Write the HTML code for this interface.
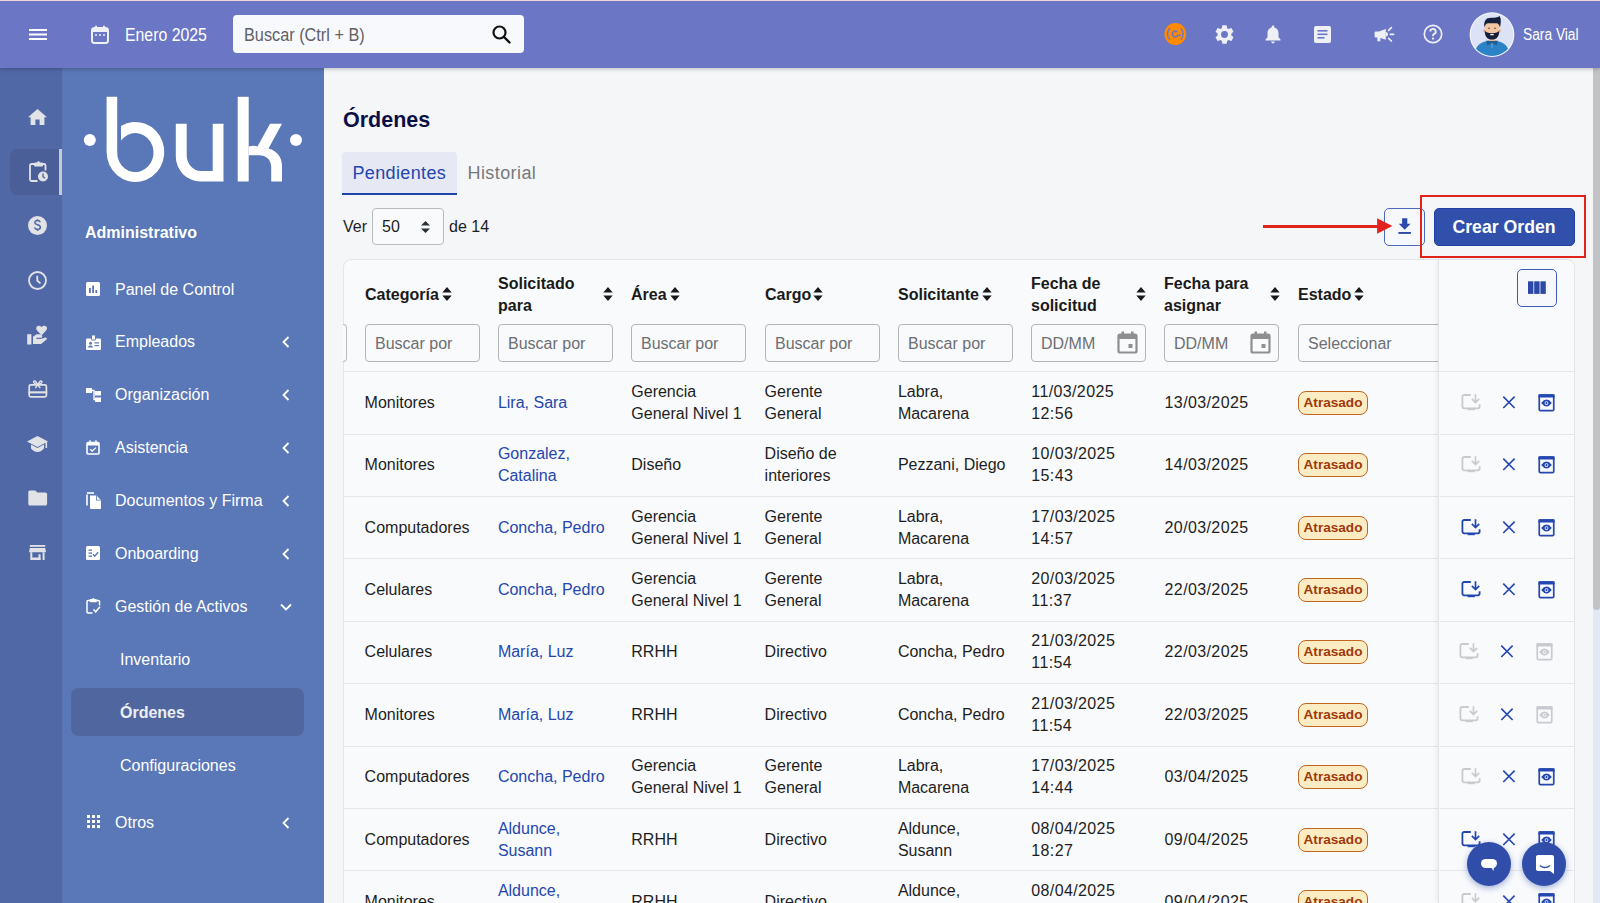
<!DOCTYPE html>
<html><head><meta charset="utf-8">
<style>
*{box-sizing:border-box;margin:0;padding:0}
html,body{width:1600px;height:903px;overflow:hidden;background:#f5f6f8;font-family:"Liberation Sans",sans-serif;color:#1e1e1e}
.a{position:absolute}
svg{position:absolute;overflow:visible}
#hdr{position:absolute;left:0;top:0;width:1600px;height:68px;background:#6b77c4;border-top:1px solid #f1d6dc;z-index:5;box-shadow:0 1px 4px rgba(0,0,0,.25)}
#rail{position:absolute;left:0;top:68px;width:62px;height:835px;background:#5168a6}
#side{position:absolute;left:62px;top:68px;width:262px;height:835px;background:#5a77b7}
.si{position:absolute;left:115px;color:#fff;font-size:16px;line-height:20px;white-space:nowrap;margin-top:1.5px}
.sub{left:120px}
.chev{position:absolute;left:282px}
#scroll{position:absolute;left:1593px;top:68px;width:7px;height:835px;background:#e4e8f2}
#thumb{position:absolute;left:1593px;top:68px;width:7px;height:542px;background:#c2c3c6;border-radius:0 0 4px 4px}
.c{position:absolute;font-size:16px;line-height:22px;color:#1e1e1e;white-space:nowrap}
.lnk{color:#2447b0}
.dt{letter-spacing:.38px}
.rowline{position:absolute;left:344px;width:1095px;height:1px;background:#e4e6eb}
.rowline2{position:absolute;left:1439.5px;width:134.5px;height:1px;background:#e4e6eb}
.badge{position:absolute;width:70px;height:24px;border:1px solid #c2651f;background:#fcecc3;border-radius:8px;color:#a0390a;font-weight:bold;font-size:13.6px;line-height:21px;text-align:center}
.ic{position:absolute}
.th{position:absolute;font-size:16px;line-height:22px;font-weight:bold;color:#1a1a1a;white-space:nowrap;margin-top:1px}
.inp{position:absolute;top:324px;height:38px;width:115px;border:1px solid #b9bbbf;border-radius:4px;background:#f9fafc;font-size:16px;line-height:36px;padding-left:9px;padding-top:1px;color:#6d6f73;border-color:#b3b5b9;white-space:nowrap;overflow:hidden}
.sort{position:absolute;width:10px;height:14px}
</style></head><body>
<!-- HEADER -->
<div id="hdr">
  <svg style="left:29px;top:28px" width="18" height="12" viewBox="0 0 18 12"><rect x="0" y="0" width="18" height="2" fill="#fff"/><rect x="0" y="4.5" width="18" height="2" fill="#fff"/><rect x="0" y="9" width="18" height="2" fill="#fff"/></svg>
  <svg style="left:91px;top:24px" width="18" height="19" viewBox="0 0 18 19"><rect x="1" y="3" width="16" height="15" rx="2.5" fill="none" stroke="#eef0f7" stroke-width="2"/><rect x="1" y="3" width="16" height="4" fill="#eef0f7"/><rect x="4" y="0.5" width="2" height="4" rx="1" fill="#eef0f7"/><rect x="12" y="0.5" width="2" height="4" rx="1" fill="#eef0f7"/><circle cx="5" cy="10" r="1" fill="#eef0f7"/><circle cx="9" cy="10" r="1" fill="#eef0f7"/><circle cx="13" cy="10" r="1" fill="#eef0f7"/></svg>
  <div class="a" style="left:125px;top:24px;font-size:17.5px;line-height:20px;color:#fff;transform:scaleX(.905);transform-origin:0 0">Enero 2025</div>
  <div class="a" style="left:233px;top:14px;width:291px;height:38px;background:#f8f9fc;border-radius:4px"></div>
  <div class="a" style="left:244px;top:24px;font-size:17.5px;line-height:20px;color:#5f6166;transform:scaleX(.93);transform-origin:0 0">Buscar (Ctrl + B)</div>
  <svg style="left:492px;top:24px" width="19" height="19" viewBox="0 0 19 19"><circle cx="7.5" cy="7.5" r="6" fill="none" stroke="#111" stroke-width="2.2"/><path d="M12 12L17.5 17.5" stroke="#111" stroke-width="2.4" stroke-linecap="round"/></svg>
  <!-- right icons -->
  <svg style="left:1160px;top:19px" width="30" height="30" viewBox="1160 20 30 30"><circle cx="1175.3" cy="34" r="10.9" fill="#ff8a00"/><path d="M1169.9 28.2A8.3 8.3 0 0 0 1169.9 39.8" stroke="#6b77c4" stroke-width="1.4" fill="none"/><path d="M1180.7 28.2A8.3 8.3 0 0 1 1180.7 39.8" stroke="#6b77c4" stroke-width="1.4" fill="none"/><path d="M1177.4 32A2.9 2.9 0 1 0 1177.6 35.8" stroke="#6b77c4" stroke-width="1.6" fill="none"/><path d="M1177 35.3L1181 35.3" stroke="#6b77c4" stroke-width="1.5"/></svg>
  <svg style="left:1212.5px;top:21.5px" width="23" height="23" viewBox="0 0 24 24"><path fill="#eef0f5" d="M19.14 12.94c.04-.3.06-.61.06-.94 0-.32-.02-.64-.07-.94l2.03-1.58a.49.49 0 0 0 .12-.61l-1.92-3.32a.49.49 0 0 0-.59-.22l-2.39.96c-.5-.38-1.03-.7-1.62-.94l-.36-2.54a.48.48 0 0 0-.48-.41h-3.84c-.24 0-.43.17-.47.41l-.36 2.54c-.59.24-1.13.57-1.62.94l-2.39-.96a.48.48 0 0 0-.59.22L2.74 8.87c-.12.21-.08.47.12.61l2.03 1.58c-.05.3-.09.63-.09.94s.02.64.07.94l-2.03 1.58a.49.49 0 0 0-.12.61l1.92 3.32c.12.22.37.29.59.22l2.39-.96c.5.38 1.03.7 1.62.94l.36 2.54c.05.24.24.41.48.41h3.84c.24 0 .44-.17.47-.41l.36-2.54c.59-.24 1.13-.56 1.62-.94l2.39.96c.22.08.47 0 .59-.22l1.92-3.32c.12-.22.07-.47-.12-.61l-2.01-1.58zM12 15.6A3.6 3.6 0 1 1 12 8.4a3.6 3.6 0 0 1 0 7.2z"/></svg>
  <svg style="left:1265px;top:24px" width="16" height="19" viewBox="0 0 16 19"><path fill="#eef0f5" d="M8 0.5c.8 0 1.3.6 1.3 1.3v.6c2.6.6 4.2 2.8 4.2 5.5v4.4l2 2.2v.9H.5v-.9l2-2.2V7.9c0-2.7 1.6-4.9 4.2-5.5v-.6C6.7 1.1 7.2.5 8 .5zM6.2 16.5h3.6c0 1.1-.8 1.9-1.8 1.9s-1.8-.8-1.8-1.9z"/></svg>
  <svg style="left:1314px;top:25px" width="17" height="17" viewBox="0 0 17 17"><rect x="0" y="0" width="17" height="17" rx="2" fill="#eef0f5"/><rect x="3.5" y="4" width="10" height="1.6" fill="#6b77c4"/><rect x="3.5" y="7.5" width="10" height="1.6" fill="#6b77c4"/><rect x="3.5" y="11" width="7" height="1.6" fill="#6b77c4"/></svg>
  <svg style="left:1372px;top:24px" width="24" height="19" viewBox="1372 25 24 19"><path fill="#eef0f5" d="M1375.8 31.5H1378.9L1385.8 29.1V39.8L1378.9 37.4H1375.8A1.2 1.2 0 0 1 1374.6 36.2V32.7A1.2 1.2 0 0 1 1375.8 31.5Z"/><rect x="1377.4" y="37" width="2.9" height="4.3" fill="#eef0f5"/><path d="M1385.8 32.1A2.2 2.2 0 0 1 1385.8 36.5Z" fill="#eef0f5"/><path d="M1388.6 30.4L1391.4 27.7M1390.4 34.3H1393.6M1388.6 38.3L1391.4 41" stroke="#eef0f5" stroke-width="1.7" stroke-linecap="round"/></svg>
  <svg style="left:1423px;top:23.3px" width="20" height="20" viewBox="0 0 20 20"><circle cx="10" cy="10" r="8.7" fill="none" stroke="#eef0f5" stroke-width="1.7"/><path d="M7.3 7.6a2.7 2.7 0 1 1 3.6 2.5c-.6.3-.9.7-.9 1.3v.8" stroke="#eef0f5" stroke-width="1.8" fill="none"/><circle cx="10" cy="14.6" r="1.1" fill="#eef0f5"/></svg>
  <!-- avatar -->
  <svg style="left:1469px;top:11px" width="46" height="46" viewBox="1469 12 46 46">
    <defs><clipPath id="av"><circle cx="1492" cy="34.6" r="21.3"/></clipPath></defs>
    <circle cx="1492" cy="34.6" r="22.4" fill="#f4f5fb"/>
    <circle cx="1492" cy="34.6" r="21.3" fill="#dde3f7"/>
    <g clip-path="url(#av)">
      <path d="M1475.5 58V51C1476 44.5 1484 40.5 1492 40.5S1508 44.5 1508.5 51V58Z" fill="#2b82c6"/>
      <path d="M1486 40.8L1498 40.8L1496.5 45.5L1492 43L1487.5 45.5Z" fill="#1e5f96"/>
      <rect x="1491.6" y="43" width=".9" height="5" fill="#7fa8cc"/>
      <rect x="1489" y="36" width="6" height="5" fill="#ecb48c"/>
      <circle cx="1484.5" cy="30.5" r="1.6" fill="#eeb892"/><circle cx="1499.5" cy="30.5" r="1.6" fill="#eeb892"/>
      <rect x="1484.8" y="21" width="14.4" height="16" rx="4" fill="#f3c6a1"/>
      <path d="M1484.6 30.5C1485 37 1487.5 39.6 1492 39.6S1499 37 1499.4 30.5C1498 32.5 1496 33.2 1492 33.2S1486 32.5 1484.6 30.5Z" fill="#16203c"/>
      <path d="M1484.3 27.5C1483.5 21 1486 17.8 1491 17.8C1494.5 17.8 1497 17.8 1500 16C1500 17 1499.5 17.8 1500.8 18.3C1500.3 19 1501.5 21 1500 27.5C1499.3 25 1498.5 23.2 1496.5 23.2H1488.2C1486.2 23.2 1485 25 1484.3 27.5Z" fill="#16203c"/>
      <circle cx="1489" cy="28.3" r=".7" fill="#3a2b2b"/><circle cx="1495" cy="28.3" r=".7" fill="#3a2b2b"/>
      <path d="M1490.3 34.6H1493.7" stroke="#fff" stroke-width="1.1"/>
    </g>
  </svg>
  <div class="a" style="left:1523px;top:24px;font-size:16px;line-height:20px;color:#fff;transform:scaleX(.86);transform-origin:0 0">Sara Vial</div>
</div>

<!-- RAIL -->
<div id="rail"></div>
<div class="a" style="left:10px;top:149px;width:49px;height:46px;background:#4a5e98;border-radius:8px 0 0 8px"></div>
<div class="a" style="left:59px;top:149px;width:3px;height:46px;background:#c9cace"></div>
<!-- rail icons -->
<svg style="left:28px;top:109px" width="19" height="16" viewBox="0 0 19 16"><path fill="#e2e3e7" d="M9.5 0L19 8.2h-2.6V16h-4.8v-5.5H7.4V16H2.6V8.2H0z"/></svg>
<svg style="left:29px;top:161px" width="19" height="21" viewBox="0 0 19 21"><path d="M5.5 3H2.5a1.5 1.5 0 0 0-1.5 1.5v14A1.5 1.5 0 0 0 2.5 20h6" fill="none" stroke="#e2e3e7" stroke-width="1.8"/><path d="M13.5 3h1.5a1.5 1.5 0 0 1 1.5 1.5v5" fill="none" stroke="#e2e3e7" stroke-width="1.8"/><rect x="5" y="1.5" width="9" height="4" rx="1" fill="#e2e3e7"/><circle cx="9.5" cy="1.5" r="1.3" fill="#e2e3e7"/><circle cx="14" cy="15.5" r="5" fill="#e2e3e7"/><path d="M14 12.5v3.2l2 1.5" stroke="#4a5e98" stroke-width="1.3" fill="none"/></svg>
<svg style="left:28px;top:216px" width="19" height="19" viewBox="0 0 19 19"><circle cx="9.5" cy="9.5" r="9.5" fill="#e2e3e7"/><path d="M12.3 6.2c-.4-1-1.4-1.6-2.8-1.6-1.6 0-2.7.8-2.7 2 0 2.7 5.6 1.6 5.6 4.6 0 1.3-1.2 2.2-2.9 2.2-1.5 0-2.6-.7-3-1.8M9.5 3.3v1.4M9.5 13.4v1.6" stroke="#5168a6" stroke-width="1.5" fill="none"/></svg>
<svg style="left:28px;top:271px" width="19" height="19" viewBox="0 0 19 19"><circle cx="9.5" cy="9.5" r="8.5" fill="none" stroke="#e2e3e7" stroke-width="1.8"/><path d="M9.3 4.8v5l3.2 2.6" stroke="#e2e3e7" stroke-width="1.8" fill="none"/></svg>
<svg style="left:20px;top:320px" width="32" height="30" viewBox="20 320 32 30"><rect x="27.2" y="334.2" width="4.2" height="10.3" fill="#e2e3e7"/><path fill="#e2e3e7" d="M33 336.8L36.6 334.2H39.5C41.3 334.2 42.3 335.2 42.3 336.3C42.3 337.3 41.4 337.8 40.5 337.8H36.8V338.6H42.5L45.2 337.6C46.3 337.2 47.2 338.2 46.7 339.3L42 343.2C41.4 343.8 40.6 344.1 39.7 344.1H33Z"/><path fill="#5168a6" d="M36.3 338.1H41.2V338.9H36.3Z"/><path fill="#e2e3e7" d="M41.6 335.2L37.5 331.1C36 329.6 35.8 327.8 36.9 326.6C38 325.4 40.2 325.4 41.6 327.2C43 325.4 45.2 325.4 46.3 326.6C47.4 327.8 47.2 329.6 45.7 331.1Z"/></svg>
<svg style="left:20px;top:375px" width="32" height="28" viewBox="20 375 32 28"><rect x="29.2" y="384.8" width="17.2" height="12" rx="1.6" fill="none" stroke="#e2e3e7" stroke-width="1.7"/><rect x="28.4" y="391.3" width="18.8" height="2.1" fill="#e2e3e7"/><path d="M37.8 384.8C36.5 382.5 35 380 33.8 381.2C32.8 382.3 35 384.5 37.8 384.8C40.6 384.5 42.8 382.3 41.8 381.2C40.6 380 39.1 382.5 37.8 384.8L35.3 388.2M37.8 384.8L40.3 388.2" fill="none" stroke="#e2e3e7" stroke-width="1.4"/></svg>
<svg style="left:27px;top:436px" width="21" height="17" viewBox="0 0 21 17"><path fill="#e2e3e7" d="M10.5 0L21 5.5 10.5 11 0 5.5z"/><path fill="#e2e3e7" d="M4 8.5v4c2 2.5 4.5 3.5 6.5 3.5s4.5-1 6.5-3.5v-4l-6.5 3.4z"/><rect x="18.5" y="6" width="1.6" height="6" fill="#e2e3e7"/></svg>
<svg style="left:20px;top:485px" width="32" height="24" viewBox="20 485 32 24"><path fill="#e2e3e7" d="M30 490.5H35.3L37.3 492.5H45.3C46.3 492.5 47.1 493.3 47.1 494.3V503.7C47.1 504.7 46.3 505.5 45.3 505.5H30C29 505.5 28.3 504.7 28.3 503.7V492.3C28.3 491.3 29 490.5 30 490.5Z"/></svg>
<svg style="left:20px;top:540px" width="32" height="24" viewBox="20 540 32 24"><rect x="29.8" y="545" width="15.4" height="1.8" fill="#e2e3e7"/><path fill="#e2e3e7" d="M29.8 548H45.2L46 552.3H29Z"/><path fill="#e2e3e7" d="M30.3 552.3H32.3V557.5H38.5V554.3H40.5V560H30.3Z"/><path fill="#e2e3e7" d="M42.6 552.3H44.6V560H42.6Z"/><path fill="#e2e3e7" d="M38.5 557.5H40.5V560H38.5Z"/></svg>

<!-- SIDEBAR -->
<div id="side"></div>
<svg style="left:83px;top:96px" width="222" height="88" viewBox="83 96 222 88">
  <circle cx="89.8" cy="140" r="6" fill="#fff"/>
  <circle cx="296" cy="140" r="6" fill="#fff"/>
  <path fill="#fff" d="M106.6 96.8H117.2V152.3A18.15 19.5 0 1 0 121 140.6V126A28.85 30 0 1 1 106.6 152Z"/>
  <path fill="#fff" d="M175.8 123.7h10.9v31.3a14 16 0 0 0 14 16h12v-47.3h10.8v57.8h-23a24.7 25 0 0 1 -24.7 -25z"/>
  <rect x="237.7" y="96.8" width="11" height="84.7" fill="#fff"/>
  <path fill="#fff" d="M248.7 146.6q4.5-1.7 8.8 -.1l12.5-22.8h12l-13.5 24.8c8.5 2.5 13.5 8.5 13.5 17.5v15.5h-10.8v-14c0-7.5-4.5-12.3-12.5-12.3h-10z"/>
</svg>
<div class="a" style="left:85px;top:222.5px;font-size:16px;line-height:20px;font-weight:bold;color:#fff">Administrativo</div>

<!-- side items -->
<svg style="left:86px;top:282px" width="14" height="14" viewBox="0 0 14 14"><rect width="14" height="14" rx="1.5" fill="#fff"/><rect x="3" y="6" width="1.8" height="5" fill="#5a77b7"/><rect x="6.2" y="3.5" width="1.8" height="7.5" fill="#5a77b7"/><rect x="9.4" y="8" width="1.8" height="3" fill="#5a77b7"/></svg>
<div class="si" style="top:278px">Panel de Control</div>

<svg style="left:86px;top:335px" width="15" height="15" viewBox="0 0 15 15"><rect x="0" y="3.5" width="15" height="11.5" rx="1.2" fill="#fff"/><rect x="5.5" y="0" width="4" height="5" rx=".8" fill="#fff" stroke="#5a77b7" stroke-width="1"/><circle cx="4.5" cy="8.3" r="1.5" fill="#5a77b7"/><path d="M2 12.5c.3-1.5 1.2-2 2.5-2s2.2.5 2.5 2z" fill="#5a77b7"/><rect x="8.5" y="7.3" width="4.5" height="1.2" fill="#5a77b7"/><rect x="8.5" y="10" width="4.5" height="1.2" fill="#5a77b7"/></svg>
<div class="si" style="top:330.5px">Empleados</div>

<svg style="left:86px;top:388px" width="15" height="14" viewBox="0 0 15 14"><rect x="0" y="0" width="6" height="5" fill="#fff"/><rect x="9" y="3" width="6" height="4.5" fill="#fff"/><rect x="9" y="9.5" width="6" height="4.5" fill="#fff"/><path d="M6 2.5h2v9h1M8 5.3h1" stroke="#fff" stroke-width="1.3" fill="none"/></svg>
<div class="si" style="top:383.5px">Organización</div>

<svg style="left:86px;top:440px" width="14" height="15" viewBox="0 0 14 15"><rect x="1" y="2.5" width="12" height="11.5" rx="1" fill="none" stroke="#fff" stroke-width="1.6"/><rect x="1" y="2.5" width="12" height="3" fill="#fff"/><rect x="3.3" y="0.3" width="1.5" height="3" fill="#fff"/><rect x="9.2" y="0.3" width="1.5" height="3" fill="#fff"/><path d="M4.3 9.3l1.9 1.9 3.6-3.6" stroke="#fff" stroke-width="1.3" fill="none"/></svg>
<div class="si" style="top:436.3px">Asistencia</div>

<svg style="left:86px;top:492px" width="15" height="17" viewBox="0 0 15 17"><path d="M1 2.5v11" stroke="#fff" stroke-width="1.6"/><path d="M1 1h7" stroke="#fff" stroke-width="1.6"/><path fill="#fff" d="M4 3.5h6.5l4.5 4.5v8c0 .6-.4 1-1 1H5c-.6 0-1-.4-1-1z"/><path fill="#5a77b7" d="M10 3.5v5h5v-.6L10.6 3.5z"/><path fill="#fff" d="M10.8 4v3.7h3.7z"/></svg>
<div class="si" style="top:489.2px">Documentos y Firma</div>

<svg style="left:86px;top:546px" width="14" height="14" viewBox="0 0 14 14"><rect width="14" height="14" rx="1.5" fill="#fff"/><rect x="2.5" y="3.5" width="3.5" height="1.3" fill="#5a77b7"/><rect x="2.5" y="6.5" width="3.5" height="1.3" fill="#5a77b7"/><rect x="2.5" y="9.5" width="3.5" height="1.3" fill="#5a77b7"/><path d="M7 8.3l1.8 1.8 3.3-3.8" stroke="#5a77b7" stroke-width="1.4" fill="none"/></svg>
<div class="si" style="top:542px">Onboarding</div>

<svg style="left:86px;top:598px" width="15" height="16" viewBox="0 0 15 16"><path d="M4 2.5H2c-.6 0-1 .4-1 1V14c0 .6.4 1 1 1h4.5" fill="none" stroke="#fff" stroke-width="1.5"/><path d="M10.5 2.5H12.5c.6 0 1 .4 1 1v4" fill="none" stroke="#fff" stroke-width="1.5"/><rect x="3.8" y="1" width="7" height="3.2" rx=".8" fill="#fff"/><circle cx="7.3" cy="1" r="1" fill="#fff"/><path d="M7.5 11.5l2.2 2.3 4.3-5" stroke="#fff" stroke-width="1.6" fill="none"/></svg>
<div class="si" style="top:595px">Gestión de Activos</div>

<div class="si sub" style="top:648px">Inventario</div>
<div class="a" style="left:71px;top:688px;width:233px;height:48px;background:#4f669f;border-radius:8px"></div>
<div class="si sub" style="top:701.2px;font-weight:bold;color:#eceef3">Órdenes</div>
<div class="si sub" style="top:754px">Configuraciones</div>

<svg style="left:87px;top:815px" width="13" height="13" viewBox="0 0 13 13"><g fill="#fff"><rect x="0" y="0" width="3" height="3"/><rect x="5" y="0" width="3" height="3"/><rect x="10" y="0" width="3" height="3"/><rect x="0" y="5" width="3" height="3"/><rect x="5" y="5" width="3" height="3"/><rect x="10" y="5" width="3" height="3"/><rect x="0" y="10" width="3" height="3"/><rect x="5" y="10" width="3" height="3"/><rect x="10" y="10" width="3" height="3"/></g></svg>
<div class="si" style="top:811.3px">Otros</div>

<!-- chevrons -->
<svg class="chev" style="top:336px" width="8" height="12" viewBox="0 0 8 12"><path d="M6.5 1L1.5 6l5 5" stroke="#fff" stroke-width="1.8" fill="none"/></svg>
<svg class="chev" style="top:389px" width="8" height="12" viewBox="0 0 8 12"><path d="M6.5 1L1.5 6l5 5" stroke="#fff" stroke-width="1.8" fill="none"/></svg>
<svg class="chev" style="top:442px" width="8" height="12" viewBox="0 0 8 12"><path d="M6.5 1L1.5 6l5 5" stroke="#fff" stroke-width="1.8" fill="none"/></svg>
<svg class="chev" style="top:495px" width="8" height="12" viewBox="0 0 8 12"><path d="M6.5 1L1.5 6l5 5" stroke="#fff" stroke-width="1.8" fill="none"/></svg>
<svg class="chev" style="top:548px" width="8" height="12" viewBox="0 0 8 12"><path d="M6.5 1L1.5 6l5 5" stroke="#fff" stroke-width="1.8" fill="none"/></svg>
<svg class="chev" style="top:817px" width="8" height="12" viewBox="0 0 8 12"><path d="M6.5 1L1.5 6l5 5" stroke="#fff" stroke-width="1.8" fill="none"/></svg>
<svg class="a" style="left:280px;top:603px" width="12" height="8" viewBox="0 0 12 8"><path d="M1 1.5l5 5 5-5" stroke="#fff" stroke-width="1.8" fill="none"/></svg>

<!-- MAIN -->
<div class="a" style="left:343px;top:106px;font-size:21.5px;line-height:28px;font-weight:bold;color:#0b0f47">Órdenes</div>
<div class="a" style="left:342px;top:152px;width:115px;height:43px;background:#e6e9f3;border-radius:4px 4px 0 0;border-bottom:2px solid #1f43ad"></div>
<div class="a" style="left:352.5px;top:162px;font-size:18px;line-height:22px;color:#2346ae;letter-spacing:.36px">Pendientes</div>
<div class="a" style="left:467.5px;top:162px;font-size:18px;line-height:22px;color:#77787c;letter-spacing:.42px">Historial</div>

<div class="a" style="left:343px;top:216.5px;font-size:16px;line-height:20px;color:#1e1e1e">Ver</div>
<div class="a" style="left:372px;top:208px;width:72px;height:37px;border:1px solid #b9bbbf;border-radius:4px;background:#f9fafc"></div>
<div class="a" style="left:382px;top:216.5px;font-size:16px;line-height:20px;color:#1e1e1e">50</div>
<svg style="left:421px;top:221px" width="9" height="12" viewBox="0 0 9 12"><path d="M4.5 0L9 4.5H0zM4.5 12L0 7.5h9z" fill="#2a2f36"/></svg>
<div class="a" style="left:449px;top:216.5px;font-size:16px;line-height:20px;color:#1e1e1e">de 14</div>

<!-- red arrow + box -->
<div class="a" style="left:1384px;top:208px;width:40.5px;height:37.5px;border:1.2px solid #4d68bf;border-radius:5px;background:#f7f8fb"></div>
<svg style="left:1395px;top:215px" width="20" height="22" viewBox="1395 215 20 22"><path fill="#2c49ab" d="M1402.1 218.3H1407.3V223.75H1410.6L1404.7 229.8L1398.75 223.75H1402.1Z"/><rect x="1398.4" y="232" width="12.5" height="1.9" fill="#2c49ab"/></svg>
<div class="a" style="left:1263px;top:224.5px;width:118px;height:3px;background:#e0241c"></div>
<svg style="left:1376px;top:217px" width="18" height="18" viewBox="1376 217 18 18"><path d="M1377.1 218.3L1392.4 226.05L1377.1 233.8Z" fill="#e0241c"/></svg>
<div class="a" style="left:1433.5px;top:208px;width:141.5px;height:37.5px;background:#3150ab;border:1px solid #2140a4;border-radius:5px"></div>
<div class="a" style="left:1433px;top:217px;width:142px;text-align:center;font-size:17.7px;line-height:20px;color:#fff;font-weight:bold">Crear Orden</div>
<div class="a" style="left:1420px;top:195px;width:166px;height:63px;border:2px solid #e0241c"></div>

<!-- TABLE CARD -->
<div class="a" style="left:343px;top:259px;width:1232px;height:700px;border:1px solid #e3e5ea;border-radius:8px;background:#f9fafc"></div>
<div class="rowline" style="top:371px"></div>
<!-- partial previous input -->
<div class="a" style="left:343px;top:324px;width:4px;height:38px;border:1px solid #b9bbbf;border-left:none;border-radius:0 4px 4px 0;background:#f9fafc"></div>

<!-- header cells -->
<div class="th" style="left:365px;top:283px">Categoría</div>
<svg class="sort" style="left:442px;top:287px" width="10" height="15" viewBox="0 0 10 15"><path d="M5 0L10 6H0zM5 15L0 9h10z" fill="#1a1a1a"/></svg>
<div class="th" style="left:498px;top:272px">Solicitado<br>para</div>
<svg class="sort" style="left:603px;top:287px" width="10" height="15" viewBox="0 0 10 15"><path d="M5 0L10 6H0zM5 15L0 9h10z" fill="#1a1a1a"/></svg>
<div class="th" style="left:631px;top:283px">Área</div>
<svg class="sort" style="left:670px;top:287px" width="10" height="15" viewBox="0 0 10 15"><path d="M5 0L10 6H0zM5 15L0 9h10z" fill="#1a1a1a"/></svg>
<div class="th" style="left:765px;top:283px">Cargo</div>
<svg class="sort" style="left:813px;top:287px" width="10" height="15" viewBox="0 0 10 15"><path d="M5 0L10 6H0zM5 15L0 9h10z" fill="#1a1a1a"/></svg>
<div class="th" style="left:898px;top:283px">Solicitante</div>
<svg class="sort" style="left:982px;top:287px" width="10" height="15" viewBox="0 0 10 15"><path d="M5 0L10 6H0zM5 15L0 9h10z" fill="#1a1a1a"/></svg>
<div class="th" style="left:1031px;top:272px">Fecha de<br>solicitud</div>
<svg class="sort" style="left:1136px;top:287px" width="10" height="15" viewBox="0 0 10 15"><path d="M5 0L10 6H0zM5 15L0 9h10z" fill="#1a1a1a"/></svg>
<div class="th" style="left:1164px;top:272px">Fecha para<br>asignar</div>
<svg class="sort" style="left:1270px;top:287px" width="10" height="15" viewBox="0 0 10 15"><path d="M5 0L10 6H0zM5 15L0 9h10z" fill="#1a1a1a"/></svg>
<div class="th" style="left:1298px;top:283px">Estado</div>
<svg class="sort" style="left:1354px;top:287px" width="10" height="15" viewBox="0 0 10 15"><path d="M5 0L10 6H0zM5 15L0 9h10z" fill="#1a1a1a"/></svg>

<!-- filter inputs -->
<div class="inp" style="left:365px">Buscar por</div>
<div class="inp" style="left:498px">Buscar por</div>
<div class="inp" style="left:631px">Buscar por</div>
<div class="inp" style="left:765px">Buscar por</div>
<div class="inp" style="left:898px">Buscar por</div>
<div class="inp" style="left:1031px">DD/MM</div>
<svg style="left:1117px;top:331px" width="21" height="23" viewBox="0 0 21 23"><rect x="1.5" y="3.5" width="18" height="18" rx="1.5" fill="none" stroke="#8d8f93" stroke-width="2.2"/><rect x="1.5" y="3.5" width="18" height="4.5" fill="#8d8f93"/><rect x="4.5" y="0.5" width="2.5" height="4" fill="#8d8f93"/><rect x="14" y="0.5" width="2.5" height="4" fill="#8d8f93"/><rect x="11.5" y="13" width="4" height="4" fill="#8d8f93"/></svg>
<div class="inp" style="left:1164px">DD/MM</div>
<svg style="left:1250px;top:331px" width="21" height="23" viewBox="0 0 21 23"><rect x="1.5" y="3.5" width="18" height="18" rx="1.5" fill="none" stroke="#8d8f93" stroke-width="2.2"/><rect x="1.5" y="3.5" width="18" height="4.5" fill="#8d8f93"/><rect x="4.5" y="0.5" width="2.5" height="4" fill="#8d8f93"/><rect x="14" y="0.5" width="2.5" height="4" fill="#8d8f93"/><rect x="11.5" y="13" width="4" height="4" fill="#8d8f93"/></svg>
<div class="inp" style="left:1298px;width:160px">Seleccionar</div>

<div class="rowline" style="top:433.5px"></div>
<div class="c " style="left:364.6px;top:391.7px">Monitores</div>
<div class="c lnk" style="left:497.9px;top:391.7px">Lira, Sara</div>
<div class="c " style="left:631.3px;top:380.7px">Gerencia<br>General Nivel 1</div>
<div class="c " style="left:764.6px;top:380.7px">Gerente<br>General</div>
<div class="c " style="left:897.9px;top:380.7px">Labra,<br>Macarena</div>
<div class="c dt" style="left:1031.3px;top:380.7px">11/03/2025<br>12:56</div>
<div class="c dt" style="left:1164.6px;top:391.7px">13/03/2025</div>
<div class="badge" style="left:1298px;top:390.7px">Atrasado</div>
<div class="rowline" style="top:495.9px"></div>
<div class="c " style="left:364.6px;top:454.1px">Monitores</div>
<div class="c lnk" style="left:497.9px;top:443.1px">Gonzalez,<br>Catalina</div>
<div class="c " style="left:631.3px;top:454.1px">Diseño</div>
<div class="c " style="left:764.6px;top:443.1px">Diseño de<br>interiores</div>
<div class="c " style="left:897.9px;top:454.1px">Pezzani, Diego</div>
<div class="c dt" style="left:1031.3px;top:443.1px">10/03/2025<br>15:43</div>
<div class="c dt" style="left:1164.6px;top:454.1px">14/03/2025</div>
<div class="badge" style="left:1298px;top:453.1px">Atrasado</div>
<div class="rowline" style="top:558.3px"></div>
<div class="c " style="left:364.6px;top:516.5px">Computadores</div>
<div class="c lnk" style="left:497.9px;top:516.5px">Concha, Pedro</div>
<div class="c " style="left:631.3px;top:505.5px">Gerencia<br>General Nivel 1</div>
<div class="c " style="left:764.6px;top:505.5px">Gerente<br>General</div>
<div class="c " style="left:897.9px;top:505.5px">Labra,<br>Macarena</div>
<div class="c dt" style="left:1031.3px;top:505.5px">17/03/2025<br>14:57</div>
<div class="c dt" style="left:1164.6px;top:516.5px">20/03/2025</div>
<div class="badge" style="left:1298px;top:515.5px">Atrasado</div>
<div class="rowline" style="top:620.7px"></div>
<div class="c " style="left:364.6px;top:578.9px">Celulares</div>
<div class="c lnk" style="left:497.9px;top:578.9px">Concha, Pedro</div>
<div class="c " style="left:631.3px;top:567.9px">Gerencia<br>General Nivel 1</div>
<div class="c " style="left:764.6px;top:567.9px">Gerente<br>General</div>
<div class="c " style="left:897.9px;top:567.9px">Labra,<br>Macarena</div>
<div class="c dt" style="left:1031.3px;top:567.9px">20/03/2025<br>11:37</div>
<div class="c dt" style="left:1164.6px;top:578.9px">22/03/2025</div>
<div class="badge" style="left:1298px;top:577.9px">Atrasado</div>
<div class="rowline" style="top:683.1px"></div>
<div class="c " style="left:364.6px;top:641.3px">Celulares</div>
<div class="c lnk" style="left:497.9px;top:641.3px">María, Luz</div>
<div class="c " style="left:631.3px;top:641.3px">RRHH</div>
<div class="c " style="left:764.6px;top:641.3px">Directivo</div>
<div class="c " style="left:897.9px;top:641.3px">Concha, Pedro</div>
<div class="c dt" style="left:1031.3px;top:630.3px">21/03/2025<br>11:54</div>
<div class="c dt" style="left:1164.6px;top:641.3px">22/03/2025</div>
<div class="badge" style="left:1298px;top:640.3px">Atrasado</div>
<div class="rowline" style="top:745.6px"></div>
<div class="c " style="left:364.6px;top:703.8px">Monitores</div>
<div class="c lnk" style="left:497.9px;top:703.8px">María, Luz</div>
<div class="c " style="left:631.3px;top:703.8px">RRHH</div>
<div class="c " style="left:764.6px;top:703.8px">Directivo</div>
<div class="c " style="left:897.9px;top:703.8px">Concha, Pedro</div>
<div class="c dt" style="left:1031.3px;top:692.8px">21/03/2025<br>11:54</div>
<div class="c dt" style="left:1164.6px;top:703.8px">22/03/2025</div>
<div class="badge" style="left:1298px;top:702.8px">Atrasado</div>
<div class="rowline" style="top:808.0px"></div>
<div class="c " style="left:364.6px;top:766.2px">Computadores</div>
<div class="c lnk" style="left:497.9px;top:766.2px">Concha, Pedro</div>
<div class="c " style="left:631.3px;top:755.2px">Gerencia<br>General Nivel 1</div>
<div class="c " style="left:764.6px;top:755.2px">Gerente<br>General</div>
<div class="c " style="left:897.9px;top:755.2px">Labra,<br>Macarena</div>
<div class="c dt" style="left:1031.3px;top:755.2px">17/03/2025<br>14:44</div>
<div class="c dt" style="left:1164.6px;top:766.2px">03/04/2025</div>
<div class="badge" style="left:1298px;top:765.2px">Atrasado</div>
<div class="rowline" style="top:870.4px"></div>
<div class="c " style="left:364.6px;top:828.6px">Computadores</div>
<div class="c lnk" style="left:497.9px;top:817.6px">Aldunce,<br>Susann</div>
<div class="c " style="left:631.3px;top:828.6px">RRHH</div>
<div class="c " style="left:764.6px;top:828.6px">Directivo</div>
<div class="c " style="left:897.9px;top:817.6px">Aldunce,<br>Susann</div>
<div class="c dt" style="left:1031.3px;top:817.6px">08/04/2025<br>18:27</div>
<div class="c dt" style="left:1164.6px;top:828.6px">09/04/2025</div>
<div class="badge" style="left:1298px;top:827.6px">Atrasado</div>
<div class="rowline" style="top:932.8px"></div>
<div class="c " style="left:364.6px;top:891.0px">Monitores</div>
<div class="c lnk" style="left:497.9px;top:880.0px">Aldunce,<br>Susann</div>
<div class="c " style="left:631.3px;top:891.0px">RRHH</div>
<div class="c " style="left:764.6px;top:891.0px">Directivo</div>
<div class="c " style="left:897.9px;top:880.0px">Aldunce,<br>Susann</div>
<div class="c dt" style="left:1031.3px;top:880.0px">08/04/2025<br>18:27</div>
<div class="c dt" style="left:1164.6px;top:891.0px">09/04/2025</div>
<div class="badge" style="left:1298px;top:890.0px">Atrasado</div>

<!-- STICKY COLUMN -->
<div class="a" style="left:1437.8px;top:260px;width:136.2px;height:643px;background:#f9fafc;border-left:1px solid #e0e2e7;box-shadow:-2px 0 4px rgba(0,0,0,.05);border-radius:0 8px 0 0;z-index:1"></div>
<div class="a" style="left:1439px;top:371px;width:135px;height:1px;background:#e4e6eb;z-index:2"></div>
<div class="a" style="left:1517px;top:269px;width:40px;height:38px;border:1px solid #3f5bb8;border-radius:5px;background:#f7f8fb;z-index:2"></div>
<svg style="left:1528px;top:281px;z-index:2" width="18" height="13" viewBox="0 0 18 13"><rect x="0" y=".3" width="5.4" height="12.6" fill="#2c49a8"/><rect x="6.2" y=".3" width="5.4" height="12.6" fill="#2c49a8"/><rect x="12.4" y=".3" width="5.4" height="12.6" fill="#2c49a8"/></svg>
<div id="sticky-rows" style="position:absolute;left:0;top:0;z-index:3"><div class="rowline2" style="top:433.5px"></div>
<svg style="left:1454.5px;top:389.70px" width="110" height="24" viewBox="1455 -12 110 24"><path d="M1470.8 -7H1464.1A1.7 1.7 0 0 0 1462.4 -5.3V4.6A1.7 1.7 0 0 0 1464.1 6.3H1477.9A1.7 1.7 0 0 0 1479.6 4.6V2.2" fill="none" stroke="#c8cacf" stroke-width="1.8"/><rect x="1467.6" y="6.3" width="7.2" height="1.9" fill="#c8cacf"/><path d="M1475.5 -7.8V0.8M1471.9 -3.2L1475.5 0.6L1479.2 -3.2" fill="none" stroke="#c8cacf" stroke-width="1.7"/><path d="M1503.3 -5.4L1514.6 6M1514.6 -5.4L1503.3 6" stroke="#2447b0" stroke-width="1.6" fill="none"/><rect x="1539.25" y="-6.95" width="14.5" height="15.6" rx="1.2" fill="none" stroke="#2447b0" stroke-width="1.7"/><rect x="1538.4" y="-7.8" width="16.2" height="3.4" rx=".6" fill="#2447b0"/><path d="M1541.2 1.05Q1546.5 -5.9 1551.8 1.05Q1546.5 8 1541.2 1.05Z" fill="#2447b0"/><circle cx="1546.5" cy="1.05" r="1.9" fill="#f9fafc"/><circle cx="1546.5" cy="1.05" r="1.1" fill="#2447b0"/></svg>
<div class="rowline2" style="top:495.9px"></div>
<svg style="left:1454.5px;top:452.11px" width="110" height="24" viewBox="1455 -12 110 24"><path d="M1470.8 -7H1464.1A1.7 1.7 0 0 0 1462.4 -5.3V4.6A1.7 1.7 0 0 0 1464.1 6.3H1477.9A1.7 1.7 0 0 0 1479.6 4.6V2.2" fill="none" stroke="#c8cacf" stroke-width="1.8"/><rect x="1467.6" y="6.3" width="7.2" height="1.9" fill="#c8cacf"/><path d="M1475.5 -7.8V0.8M1471.9 -3.2L1475.5 0.6L1479.2 -3.2" fill="none" stroke="#c8cacf" stroke-width="1.7"/><path d="M1503.3 -5.4L1514.6 6M1514.6 -5.4L1503.3 6" stroke="#2447b0" stroke-width="1.6" fill="none"/><rect x="1539.25" y="-6.95" width="14.5" height="15.6" rx="1.2" fill="none" stroke="#2447b0" stroke-width="1.7"/><rect x="1538.4" y="-7.8" width="16.2" height="3.4" rx=".6" fill="#2447b0"/><path d="M1541.2 1.05Q1546.5 -5.9 1551.8 1.05Q1546.5 8 1541.2 1.05Z" fill="#2447b0"/><circle cx="1546.5" cy="1.05" r="1.9" fill="#f9fafc"/><circle cx="1546.5" cy="1.05" r="1.1" fill="#2447b0"/></svg>
<div class="rowline2" style="top:558.3px"></div>
<svg style="left:1454.5px;top:514.52px" width="110" height="24" viewBox="1455 -12 110 24"><path d="M1470.8 -7H1464.1A1.7 1.7 0 0 0 1462.4 -5.3V4.6A1.7 1.7 0 0 0 1464.1 6.3H1477.9A1.7 1.7 0 0 0 1479.6 4.6V2.2" fill="none" stroke="#2447b0" stroke-width="1.8"/><rect x="1467.6" y="6.3" width="7.2" height="1.9" fill="#2447b0"/><path d="M1475.5 -7.8V0.8M1471.9 -3.2L1475.5 0.6L1479.2 -3.2" fill="none" stroke="#2447b0" stroke-width="1.7"/><path d="M1503.3 -5.4L1514.6 6M1514.6 -5.4L1503.3 6" stroke="#2447b0" stroke-width="1.6" fill="none"/><rect x="1539.25" y="-6.95" width="14.5" height="15.6" rx="1.2" fill="none" stroke="#2447b0" stroke-width="1.7"/><rect x="1538.4" y="-7.8" width="16.2" height="3.4" rx=".6" fill="#2447b0"/><path d="M1541.2 1.05Q1546.5 -5.9 1551.8 1.05Q1546.5 8 1541.2 1.05Z" fill="#2447b0"/><circle cx="1546.5" cy="1.05" r="1.9" fill="#f9fafc"/><circle cx="1546.5" cy="1.05" r="1.1" fill="#2447b0"/></svg>
<div class="rowline2" style="top:620.7px"></div>
<svg style="left:1454.5px;top:576.94px" width="110" height="24" viewBox="1455 -12 110 24"><path d="M1470.8 -7H1464.1A1.7 1.7 0 0 0 1462.4 -5.3V4.6A1.7 1.7 0 0 0 1464.1 6.3H1477.9A1.7 1.7 0 0 0 1479.6 4.6V2.2" fill="none" stroke="#2447b0" stroke-width="1.8"/><rect x="1467.6" y="6.3" width="7.2" height="1.9" fill="#2447b0"/><path d="M1475.5 -7.8V0.8M1471.9 -3.2L1475.5 0.6L1479.2 -3.2" fill="none" stroke="#2447b0" stroke-width="1.7"/><path d="M1503.3 -5.4L1514.6 6M1514.6 -5.4L1503.3 6" stroke="#2447b0" stroke-width="1.6" fill="none"/><rect x="1539.25" y="-6.95" width="14.5" height="15.6" rx="1.2" fill="none" stroke="#2447b0" stroke-width="1.7"/><rect x="1538.4" y="-7.8" width="16.2" height="3.4" rx=".6" fill="#2447b0"/><path d="M1541.2 1.05Q1546.5 -5.9 1551.8 1.05Q1546.5 8 1541.2 1.05Z" fill="#2447b0"/><circle cx="1546.5" cy="1.05" r="1.9" fill="#f9fafc"/><circle cx="1546.5" cy="1.05" r="1.1" fill="#2447b0"/></svg>
<div class="rowline2" style="top:683.1px"></div>
<svg style="left:1452.5px;top:639.35px" width="110" height="24" viewBox="1455 -12 110 24"><path d="M1470.8 -7H1464.1A1.7 1.7 0 0 0 1462.4 -5.3V4.6A1.7 1.7 0 0 0 1464.1 6.3H1477.9A1.7 1.7 0 0 0 1479.6 4.6V2.2" fill="none" stroke="#c8cacf" stroke-width="1.8"/><rect x="1467.6" y="6.3" width="7.2" height="1.9" fill="#c8cacf"/><path d="M1475.5 -7.8V0.8M1471.9 -3.2L1475.5 0.6L1479.2 -3.2" fill="none" stroke="#c8cacf" stroke-width="1.7"/><path d="M1503.3 -5.4L1514.6 6M1514.6 -5.4L1503.3 6" stroke="#2447b0" stroke-width="1.6" fill="none"/><rect x="1539.25" y="-6.95" width="14.5" height="15.6" rx="1.2" fill="none" stroke="#c8cacf" stroke-width="1.7"/><rect x="1538.4" y="-7.8" width="16.2" height="3.4" rx=".6" fill="#c8cacf"/><path d="M1541.2 1.05Q1546.5 -5.9 1551.8 1.05Q1546.5 8 1541.2 1.05Z" fill="#c8cacf"/><circle cx="1546.5" cy="1.05" r="1.9" fill="#f9fafc"/><circle cx="1546.5" cy="1.05" r="1.1" fill="#c8cacf"/></svg>
<div class="rowline2" style="top:745.6px"></div>
<svg style="left:1452.5px;top:701.75px" width="110" height="24" viewBox="1455 -12 110 24"><path d="M1470.8 -7H1464.1A1.7 1.7 0 0 0 1462.4 -5.3V4.6A1.7 1.7 0 0 0 1464.1 6.3H1477.9A1.7 1.7 0 0 0 1479.6 4.6V2.2" fill="none" stroke="#c8cacf" stroke-width="1.8"/><rect x="1467.6" y="6.3" width="7.2" height="1.9" fill="#c8cacf"/><path d="M1475.5 -7.8V0.8M1471.9 -3.2L1475.5 0.6L1479.2 -3.2" fill="none" stroke="#c8cacf" stroke-width="1.7"/><path d="M1503.3 -5.4L1514.6 6M1514.6 -5.4L1503.3 6" stroke="#2447b0" stroke-width="1.6" fill="none"/><rect x="1539.25" y="-6.95" width="14.5" height="15.6" rx="1.2" fill="none" stroke="#c8cacf" stroke-width="1.7"/><rect x="1538.4" y="-7.8" width="16.2" height="3.4" rx=".6" fill="#c8cacf"/><path d="M1541.2 1.05Q1546.5 -5.9 1551.8 1.05Q1546.5 8 1541.2 1.05Z" fill="#c8cacf"/><circle cx="1546.5" cy="1.05" r="1.9" fill="#f9fafc"/><circle cx="1546.5" cy="1.05" r="1.1" fill="#c8cacf"/></svg>
<div class="rowline2" style="top:808.0px"></div>
<svg style="left:1454.5px;top:764.17px" width="110" height="24" viewBox="1455 -12 110 24"><path d="M1470.8 -7H1464.1A1.7 1.7 0 0 0 1462.4 -5.3V4.6A1.7 1.7 0 0 0 1464.1 6.3H1477.9A1.7 1.7 0 0 0 1479.6 4.6V2.2" fill="none" stroke="#c8cacf" stroke-width="1.8"/><rect x="1467.6" y="6.3" width="7.2" height="1.9" fill="#c8cacf"/><path d="M1475.5 -7.8V0.8M1471.9 -3.2L1475.5 0.6L1479.2 -3.2" fill="none" stroke="#c8cacf" stroke-width="1.7"/><path d="M1503.3 -5.4L1514.6 6M1514.6 -5.4L1503.3 6" stroke="#2447b0" stroke-width="1.6" fill="none"/><rect x="1539.25" y="-6.95" width="14.5" height="15.6" rx="1.2" fill="none" stroke="#2447b0" stroke-width="1.7"/><rect x="1538.4" y="-7.8" width="16.2" height="3.4" rx=".6" fill="#2447b0"/><path d="M1541.2 1.05Q1546.5 -5.9 1551.8 1.05Q1546.5 8 1541.2 1.05Z" fill="#2447b0"/><circle cx="1546.5" cy="1.05" r="1.9" fill="#f9fafc"/><circle cx="1546.5" cy="1.05" r="1.1" fill="#2447b0"/></svg>
<div class="rowline2" style="top:870.4px"></div>
<svg style="left:1454.5px;top:826.58px" width="110" height="24" viewBox="1455 -12 110 24"><path d="M1470.8 -7H1464.1A1.7 1.7 0 0 0 1462.4 -5.3V4.6A1.7 1.7 0 0 0 1464.1 6.3H1477.9A1.7 1.7 0 0 0 1479.6 4.6V2.2" fill="none" stroke="#2447b0" stroke-width="1.8"/><rect x="1467.6" y="6.3" width="7.2" height="1.9" fill="#2447b0"/><path d="M1475.5 -7.8V0.8M1471.9 -3.2L1475.5 0.6L1479.2 -3.2" fill="none" stroke="#2447b0" stroke-width="1.7"/><path d="M1503.3 -5.4L1514.6 6M1514.6 -5.4L1503.3 6" stroke="#2447b0" stroke-width="1.6" fill="none"/><rect x="1539.25" y="-6.95" width="14.5" height="15.6" rx="1.2" fill="none" stroke="#2447b0" stroke-width="1.7"/><rect x="1538.4" y="-7.8" width="16.2" height="3.4" rx=".6" fill="#2447b0"/><path d="M1541.2 1.05Q1546.5 -5.9 1551.8 1.05Q1546.5 8 1541.2 1.05Z" fill="#2447b0"/><circle cx="1546.5" cy="1.05" r="1.9" fill="#f9fafc"/><circle cx="1546.5" cy="1.05" r="1.1" fill="#2447b0"/></svg>
<div class="rowline2" style="top:932.8px"></div>
<svg style="left:1454.5px;top:888.99px" width="110" height="24" viewBox="1455 -12 110 24"><path d="M1470.8 -7H1464.1A1.7 1.7 0 0 0 1462.4 -5.3V4.6A1.7 1.7 0 0 0 1464.1 6.3H1477.9A1.7 1.7 0 0 0 1479.6 4.6V2.2" fill="none" stroke="#c8cacf" stroke-width="1.8"/><rect x="1467.6" y="6.3" width="7.2" height="1.9" fill="#c8cacf"/><path d="M1475.5 -7.8V0.8M1471.9 -3.2L1475.5 0.6L1479.2 -3.2" fill="none" stroke="#c8cacf" stroke-width="1.7"/><path d="M1503.3 -5.4L1514.6 6M1514.6 -5.4L1503.3 6" stroke="#2447b0" stroke-width="1.6" fill="none"/><rect x="1539.25" y="-6.95" width="14.5" height="15.6" rx="1.2" fill="none" stroke="#2447b0" stroke-width="1.7"/><rect x="1538.4" y="-7.8" width="16.2" height="3.4" rx=".6" fill="#2447b0"/><path d="M1541.2 1.05Q1546.5 -5.9 1551.8 1.05Q1546.5 8 1541.2 1.05Z" fill="#2447b0"/><circle cx="1546.5" cy="1.05" r="1.9" fill="#f9fafc"/><circle cx="1546.5" cy="1.05" r="1.1" fill="#2447b0"/></svg></div>

<!-- fabs -->
<div class="a" style="left:1467px;top:842px;width:44px;height:44px;border-radius:50%;background:#2f4da9;box-shadow:0 2px 6px rgba(47,77,169,.45);z-index:6"></div>
<svg style="left:1481px;top:859px;z-index:7" width="16" height="13" viewBox="0 0 16 13"><rect x="0" y="0" width="16" height="9" rx="4.5" fill="#fff"/><path d="M10 8l2.5 4 .5-4z" fill="#fff"/></svg>
<div class="a" style="left:1522px;top:842px;width:44px;height:44px;border-radius:50%;background:#2f4da9;box-shadow:0 2px 6px rgba(47,77,169,.45);z-index:6"></div>
<svg style="left:1535.5px;top:855px;z-index:7" width="18" height="19" viewBox="0 0 18 19"><path d="M2 0h14c1.1 0 2 .9 2 2v17l-4-3H2c-1.1 0-2-.9-2-2V2C0 .9.9 0 2 0z" fill="#fff"/><path d="M4 10.5c3 2.5 7 2.5 10 0" stroke="#2f4da9" stroke-width="1.5" fill="none"/></svg>

<!-- scrollbar -->
<div id="scroll"></div>
<div id="thumb"></div>
</body></html>
